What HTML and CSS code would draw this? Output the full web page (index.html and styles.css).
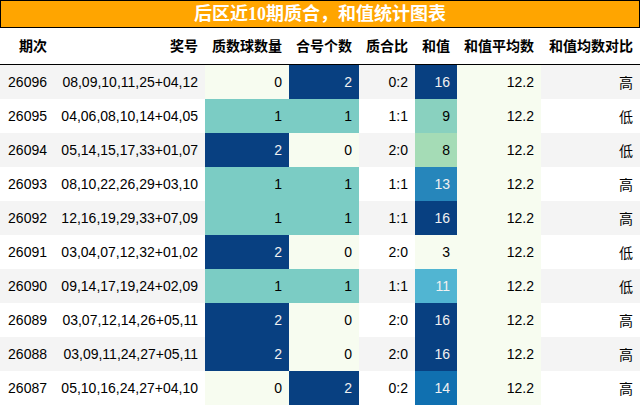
FILE: index.html
```
<!DOCTYPE html>
<html lang="zh">
<head>
<meta charset="utf-8">
<title>后区近10期质合，和值统计图表</title>
<link rel="stylesheet" href="styles.css">
</head>
<body>
<div class="title">后区近10期质合，和值统计图表</div>
<table class="stats">
  <colgroup>
    <col class="c1"><col class="c2"><col class="c3"><col class="c4"><col class="c5"><col class="c6"><col class="c7"><col class="c8">
  </colgroup>
  <thead>
    <tr><th>期次</th><th>奖号</th><th>质数球数量</th><th>合号个数</th><th>质合比</th><th>和值</th><th>和值平均数</th><th>和值均数对比</th></tr>
  </thead>
  <tbody>
    <tr class="odd"><td>26096</td><td>08,09,10,11,25+04,12</td><td class="g0">0</td><td class="g2">2</td><td>0:2</td><td class="s16">16</td><td class="g0">12.2</td><td class="cjk">高</td></tr>
    <tr><td>26095</td><td>04,06,08,10,14+04,05</td><td class="g1">1</td><td class="g1">1</td><td>1:1</td><td class="s9">9</td><td class="g0">12.2</td><td class="cjk">低</td></tr>
    <tr class="odd"><td>26094</td><td>05,14,15,17,33+01,07</td><td class="g2">2</td><td class="g0">0</td><td>2:0</td><td class="s8">8</td><td class="g0">12.2</td><td class="cjk">低</td></tr>
    <tr><td>26093</td><td>08,10,22,26,29+03,10</td><td class="g1">1</td><td class="g1">1</td><td>1:1</td><td class="s13">13</td><td class="g0">12.2</td><td class="cjk">高</td></tr>
    <tr class="odd"><td>26092</td><td>12,16,19,29,33+07,09</td><td class="g1">1</td><td class="g1">1</td><td>1:1</td><td class="s16">16</td><td class="g0">12.2</td><td class="cjk">高</td></tr>
    <tr><td>26091</td><td>03,04,07,12,32+01,02</td><td class="g2">2</td><td class="g0">0</td><td>2:0</td><td class="s3">3</td><td class="g0">12.2</td><td class="cjk">低</td></tr>
    <tr class="odd"><td>26090</td><td>09,14,17,19,24+02,09</td><td class="g1">1</td><td class="g1">1</td><td>1:1</td><td class="s11">11</td><td class="g0">12.2</td><td class="cjk">低</td></tr>
    <tr><td>26089</td><td>03,07,12,14,26+05,11</td><td class="g2">2</td><td class="g0">0</td><td>2:0</td><td class="s16">16</td><td class="g0">12.2</td><td class="cjk">高</td></tr>
    <tr class="odd"><td>26088</td><td>03,09,11,24,27+05,11</td><td class="g2">2</td><td class="g0">0</td><td>2:0</td><td class="s16">16</td><td class="g0">12.2</td><td class="cjk">高</td></tr>
    <tr><td>26087</td><td>05,10,16,24,27+04,10</td><td class="g0">0</td><td class="g2">2</td><td>0:2</td><td class="s14">14</td><td class="g0">12.2</td><td class="cjk">高</td></tr>
  </tbody>
</table>
</body>
</html>
```
FILE: styles.css
```
html, body {
  margin: 0;
  padding: 0;
  background: #ffffff;
}

.title {
  width: 638px;
  height: 26px;
  line-height: 26px;
  border: 1px solid #000000;
  background: #ffa500;
  color: #ffffff;
  text-align: center;
  font-family: "Liberation Serif", "Noto Sans CJK SC", serif;
  font-weight: bold;
  font-size: 18px;
}

.stats {
  width: 640px;
  table-layout: fixed;
  border-collapse: separate;
  border-spacing: 0;
  margin-top: 1px;
  font-family: "Liberation Sans", "Noto Sans CJK SC", sans-serif;
  font-size: 14px;
  color: #000000;
}

.c1 { width: 54px; }
.c2 { width: 151px; }
.c3 { width: 84px; }
.c4 { width: 70px; }
.c5 { width: 56px; }
.c6 { width: 42px; }
.c7 { width: 84px; }
.c8 { width: 99px; }

.stats th {
  text-align: right;
  font-weight: bold;
  padding: 9px 7px;
  line-height: 17px;
  border-bottom: 1px solid #000000;
  white-space: nowrap;
}

.stats td {
  text-align: right;
  padding: 9px 7px;
  line-height: 16px;
  white-space: nowrap;
}

.stats tbody tr.odd td { background: #f4f4f4; }

.stats td.cjk { font-family: "Noto Sans CJK SC", sans-serif; }

.stats tbody tr td.g0 { background: #f7fcf0; color: #000000; }
.stats tbody tr td.g1 { background: #7bccc4; color: #000000; }
.stats tbody tr td.g2 { background: #084081; color: #f1f1f1; }

.stats tbody tr td.s3 { background: #f7fcf0; color: #000000; }
.stats tbody tr td.s8 { background: #a5dcb6; color: #000000; }
.stats tbody tr td.s9 { background: #89d1bf; color: #000000; }
.stats tbody tr td.s11 { background: #51b5d2; color: #f1f1f1; }
.stats tbody tr td.s13 { background: #2686bb; color: #f1f1f1; }
.stats tbody tr td.s14 { background: #1070b0; color: #f1f1f1; }
.stats tbody tr td.s16 { background: #084081; color: #f1f1f1; }
```
